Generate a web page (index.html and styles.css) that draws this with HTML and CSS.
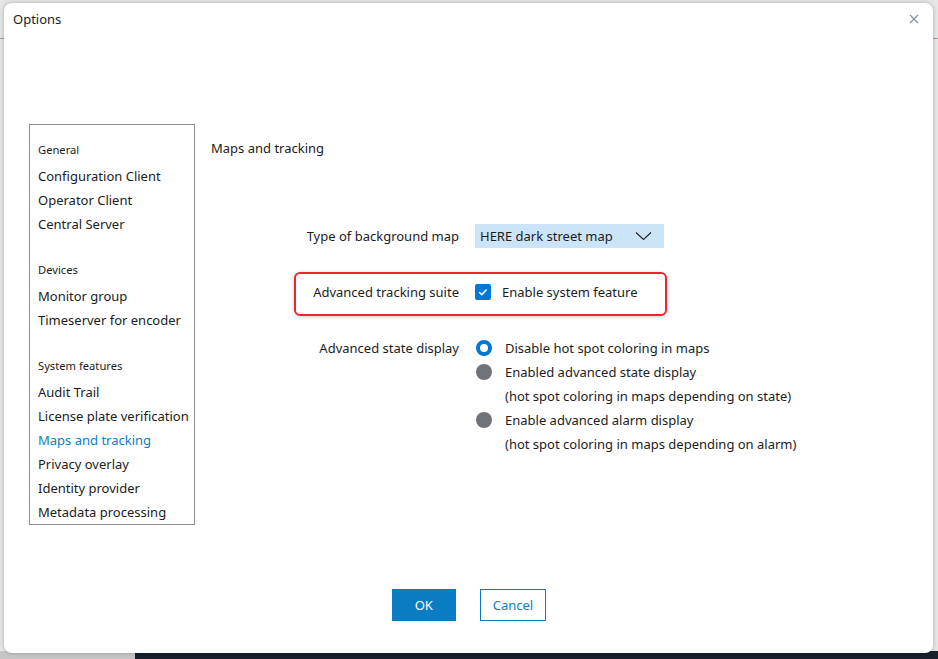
FILE: index.html
```html
<!DOCTYPE html>
<html lang="en">
<head>
    <meta charset="UTF-8">
    <title>Options</title>
    <link rel="stylesheet" href="styles.css">
</head>
<body>
    <div class="dialog">
        <div class="title-bar">
            <span class="title">Options</span>
            <button class="close" aria-label="Close">
                <svg width="10" height="10" viewBox="0 0 10 10"><path d="M1 1L9 9M9 1L1 9" stroke="#8e959d" stroke-width="1.4" fill="none"/></svg>
            </button>
        </div>
        <div class="main">
            <div class="nav">
                <h4>General</h4>
                <a>Configuration Client</a>
                <a>Operator Client</a>
                <a>Central Server</a>
                <h4>Devices</h4>
                <a>Monitor group</a>
                <a>Timeserver for encoder</a>
                <h4>System features</h4>
                <a>Audit Trail</a>
                <a>License plate verification</a>
                <a class="active">Maps and tracking</a>
                <a>Privacy overlay</a>
                <a>Identity provider</a>
                <a>Metadata processing</a>
            </div>
            <div class="content">
                <h3>Maps and tracking</h3>
                <div class="form">
                    <div class="row">
                        <label>Type of background map</label>
                        <div class="select">
                            <span>HERE dark street map</span>
                            <svg width="17" height="10" viewBox="0 0 17 10"><path d="M1 1.5L8.5 8.5L16 1.5" stroke="#222" stroke-width="1.1" fill="none"/></svg>
                        </div>
                    </div>
                    <div class="row highlight">
                        <label>Advanced tracking suite</label>
                        <span class="check">
                            <svg width="16" height="16" viewBox="0 0 16 16"><path d="M4.2 8.2L6.8 10.6L11.6 5.4" stroke="#fff" stroke-width="1.5" fill="none"/></svg>
                        </span>
                        <span class="check-text">Enable system feature</span>
                    </div>
                    <div class="row radios">
                        <label>Advanced state display</label>
                        <div class="options">
                            <div class="option"><span class="radio on"></span>Disable hot spot coloring in maps</div>
                            <div class="option"><span class="radio"></span>Enabled advanced state display</div>
                            <div class="note">(hot spot coloring in maps depending on state)</div>
                            <div class="option"><span class="radio"></span>Enable advanced alarm display</div>
                            <div class="note">(hot spot coloring in maps depending on alarm)</div>
                        </div>
                    </div>
                </div>
            </div>
        </div>
        <div class="buttons">
            <button class="btn primary">OK</button>
            <button class="btn">Cancel</button>
        </div>
    </div>
</body>
</html>
```

FILE: styles.css
```css
* {
    box-sizing: border-box;
}
body {
    margin: 0;
    height: 659px;
    padding: 3px 5px 6px 4px;
    font-family: 'Noto Sans', 'Open Sans', sans-serif;
    font-size: 13px;
    color: #1c1c1c;
    background:
        linear-gradient(#17212b, #17212b) 135px 100% / 100% 8px no-repeat,
        linear-gradient(#c6c6c6, #c6c6c6) 0 100% / 135px 8px no-repeat,
        linear-gradient(#a99d84, #a99d84) 0 38px / 100% 1px no-repeat,
        #e6e6e6;
    overflow: hidden;
}
.dialog {
    height: 650px;
    background: white;
    border-radius: 8px;
    box-shadow: 0 0 4px rgba(0, 0, 0, 0.25);
    display: flex;
    flex-direction: column;
}
.title-bar {
    height: 34px;
    display: flex;
    align-items: center;
    justify-content: space-between;
    padding: 0 14px 3px 9px;
}
.title {
    font-size: 13px;
    color: #222;
}
.close {
    border: none;
    background: none;
    padding: 0;
    display: flex;
}
.main {
    display: flex;
    padding: 87px 0 0 25px;
}
.nav {
    width: 166px;
    height: 401px;
    border: 1px solid #8d9095;
    padding: 13px 0 0 8px;
    display: flex;
    flex-direction: column;
}
.nav h4 {
    margin: 0;
    font-size: 11.2px;
    font-weight: normal;
    line-height: 24px;
}
.nav h4 + a {
    margin-top: 2px;
}
.nav a + h4 {
    margin-top: 22px;
}
.nav a {
    line-height: 24px;
    white-space: nowrap;
}
.nav a.active {
    color: #0a7fc6;
}
.content {
    padding: 12px 0 0 16px;
}
.content h3 {
    margin: 0;
    font-size: 13px;
    font-weight: normal;
    line-height: 24px;
}
.form {
    margin: 64px 0 0 85px;
}
.row {
    display: flex;
    align-items: flex-start;
    line-height: 24px;
}
.row label {
    width: 163px;
    text-align: right;
    margin-right: 16px;
    white-space: nowrap;
}
.select {
    width: 189px;
    height: 24px;
    background: #cce4f7;
    display: flex;
    align-items: center;
    justify-content: space-between;
    padding: 0 12px 0 5px;
}
.highlight {
    width: 373px;
    margin: 24px 0 0 -2px;
    border: 2px solid #e8262d;
    border-radius: 6px;
    padding: 6px 0 10px;
    box-shadow: 0 1px 4px rgba(0, 0, 0, 0.2);
}
.check {
    width: 16px;
    height: 16px;
    margin-top: 4px;
    background: #0078d4;
    border-radius: 2px;
    display: flex;
}
.check-text {
    margin-left: 11px;
}
.radios {
    margin-top: 20px;
}
.options {
    margin-left: 1px;
}
.option {
    display: flex;
    align-items: center;
    height: 24px;
}
.radio {
    width: 16px;
    height: 16px;
    border-radius: 50%;
    background: #6f7277;
    margin-right: 13px;
}
.radio.on {
    background: white;
    border: 4px solid #0078d4;
}
.note {
    padding-left: 29px;
}
.buttons {
    margin-top: auto;
    padding: 0 0 32px 1px;
    display: flex;
    justify-content: center;
    gap: 24px;
}
.btn {
    height: 32px;
    min-width: 64px;
    padding: 0 12px;
    font-family: inherit;
    font-size: 13px;
    border: 1px solid #0a7cc2;
    background: white;
    color: #0a7cc2;
}
.btn.primary {
    background: #0a7cc2;
    color: white;
}
```
